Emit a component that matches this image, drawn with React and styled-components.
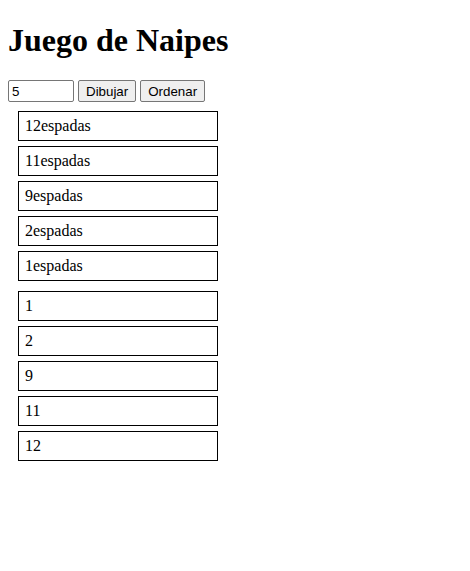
import styled, { createGlobalStyle } from "styled-components";

const Global = createGlobalStyle`
  body {
    margin: 8px;
    font-family: "Liberation Serif", "Times New Roman", serif;
    background: #fff;
    color: #000;
  }
`;

const Title = styled.h1`
  font-size: 32px;
  font-weight: bold;
  margin: 13.5px 0 21.5px;
  line-height: 37px;
`;

const Controls = styled.div`
  display: flex;
  align-items: center;
  gap: 4px;
  height: 22px;
`;

const NumberInput = styled.input`
  box-sizing: border-box;
  width: 66px;
  height: 22px;
  padding: 1px 3px;
  border: 1px solid #767676;
  border-radius: 2px;
  font-family: "Liberation Sans", Arial, sans-serif;
  font-size: 13.33px;
`;

const Button = styled.button`
  box-sizing: border-box;
  height: 22px;
  padding: 1px 7px;
  background: #efefef;
  border: 1px solid #767676;
  border-radius: 2px;
  font-family: "Liberation Sans", Arial, sans-serif;
  font-size: 13.33px;
  color: #000;
`;

const Lists = styled.div`
  display: flex;
  flex-direction: column;
  gap: 10px;
  padding: 9px 10px 0;
`;

const List = styled.div`
  display: flex;
  flex-direction: column;
  gap: 5px;
`;

const Card = styled.div`
  box-sizing: border-box;
  width: 200px;
  height: 30px;
  border: 1px solid #000;
  padding: 5px 6px;
  font-size: 16px;
  line-height: 18px;
`;

const drawn = [12, 11, 9, 2, 1];
const sorted = [1, 2, 9, 11, 12];

export default function App() {
  return (
    <>
      <Global />
      <Title>Juego de Naipes</Title>
      <Controls>
        <NumberInput type="number" defaultValue="5" />
        <Button>Dibujar</Button>
        <Button>Ordenar</Button>
      </Controls>
      <Lists>
        <List>
          {drawn.map((n) => (
            <Card key={n}>{n}espadas</Card>
          ))}
        </List>
        <List>
          {sorted.map((n) => (
            <Card key={n}>{n}</Card>
          ))}
        </List>
      </Lists>
    </>
  );
}
